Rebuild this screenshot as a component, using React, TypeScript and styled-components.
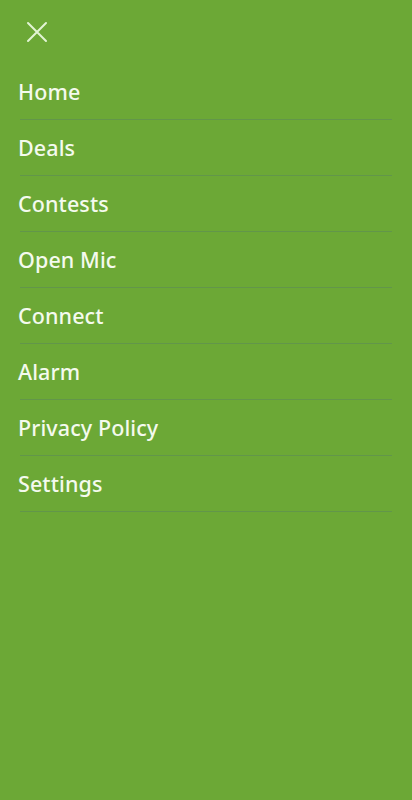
import React from 'react';
import styled, { createGlobalStyle } from 'styled-components';

const GlobalStyle = createGlobalStyle`
  html, body {
    margin: 0;
    padding: 0;
    background: #6ca836;
  }
`;

const Drawer = styled.nav`
  width: 412px;
  height: 800px;
  background: #6ca836;
  font-family: 'Noto Sans', 'Open Sans', sans-serif;
  display: flex;
  flex-direction: column;
`;

const Header = styled.div`
  height: 64px;
  display: flex;
  align-items: center;
  padding-left: 24px;
`;

const CloseButton = styled.button`
  width: 26px;
  height: 26px;
  padding: 0;
  border: none;
  background: transparent;
  display: flex;
  align-items: center;
  justify-content: center;
  cursor: pointer;
`;

const MenuList = styled.ul`
  list-style: none;
  margin: 0;
  padding: 0;
`;

const MenuItem = styled.li`
  height: 56px;
  box-sizing: border-box;
  display: flex;
  align-items: center;
  padding: 0 0 2px 18px;
  position: relative;
  color: #f4faee;
  font-size: 21.5px;
  font-weight: 500;
  letter-spacing: 0.1px;

  &::after {
    content: '';
    position: absolute;
    left: 20px;
    right: 20px;
    bottom: 0;
    height: 1px;
    background: #62964a;
  }
`;

const items = ['Home', 'Deals', 'Contests', 'Open Mic', 'Connect', 'Alarm', 'Privacy Policy', 'Settings'];

export default function App() {
  return (
    <>
      <GlobalStyle />
      <Drawer>
        <Header>
          <CloseButton aria-label="Close">
            <svg width="24" height="24" viewBox="0 0 24 24">
              <path d="M3 3 L21 21 M21 3 L3 21" stroke="#e2f4d4" strokeWidth="2" strokeLinecap="round" />
            </svg>
          </CloseButton>
        </Header>
        <MenuList>
          {items.map((item) => (
            <MenuItem key={item}>{item}</MenuItem>
          ))}
        </MenuList>
      </Drawer>
    </>
  );
}
